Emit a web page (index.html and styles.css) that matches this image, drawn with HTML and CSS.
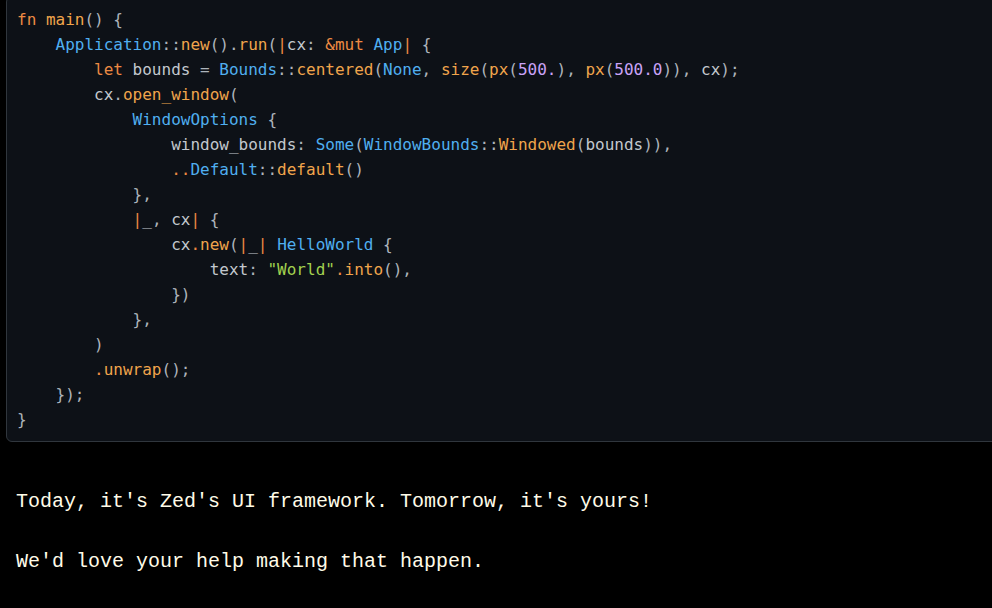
FILE: index.html
```html
<!DOCTYPE html>
<html lang="en">
<head>
<meta charset="utf-8">
<title>Zed UI framework</title>
<link rel="stylesheet" href="styles.css">
</head>
<body>
<div class="page">
<pre class="code"><code><span class="k">fn</span> <span class="f">main</span><span class="p">()</span> <span class="p">{</span>
    <span class="t">Application</span><span class="p">::</span><span class="f">new</span><span class="p">().</span><span class="f">run</span><span class="p">(</span><span class="k">|</span>cx<span class="p">:</span> <span class="k">&amp;mut</span> <span class="t">App</span><span class="k">|</span> <span class="p">{</span>
        <span class="k">let</span> bounds <span class="p">=</span> <span class="t">Bounds</span><span class="p">::</span><span class="f">centered</span><span class="p">(</span><span class="t">None</span><span class="p">,</span> <span class="f">size</span><span class="p">(</span><span class="f">px</span><span class="p">(</span><span class="n">500.</span><span class="p">),</span> <span class="f">px</span><span class="p">(</span><span class="n">500.0</span><span class="p">)),</span> cx<span class="p">);</span>
        cx<span class="p">.</span><span class="f">open_window</span><span class="p">(</span>
            <span class="t">WindowOptions</span> <span class="p">{</span>
                window_bounds<span class="p">:</span> <span class="t">Some</span><span class="p">(</span><span class="t">WindowBounds</span><span class="p">::</span><span class="f">Windowed</span><span class="p">(</span>bounds<span class="p">)),</span>
                <span class="k">..</span><span class="t">Default</span><span class="p">::</span><span class="f">default</span><span class="p">()</span>
            <span class="p">},</span>
            <span class="k">|</span>_<span class="p">,</span> cx<span class="k">|</span> <span class="p">{</span>
                cx<span class="k">.</span><span class="f">new</span><span class="p">(</span><span class="k">|</span>_<span class="k">|</span> <span class="t">HelloWorld</span> <span class="p">{</span>
                    text<span class="p">:</span> <span class="s">"World"</span><span class="k">.</span><span class="f">into</span><span class="p">(),</span>
                <span class="p">})</span>
            <span class="p">},</span>
        <span class="p">)</span>
        <span class="k">.</span><span class="f">unwrap</span><span class="p">();</span>
    <span class="p">});</span>
<span class="p">}</span></code></pre>
<div class="prose">
<p>Today, it's Zed's UI framework. Tomorrow, it's yours!</p>
<p>We'd love your help making that happen.</p>
</div>
</div>
</body>
</html>
```

FILE: styles.css
```css
html, body {
  margin: 0;
  padding: 0;
  background: #000;
}

.page {
  overflow: hidden;
  height: 608px;
}

.code {
  margin: -4px -40px 0 6px;
  padding: 10px 10px 9px 10px;
  background: #0d1117;
  border: 1px solid #30363d;
  border-radius: 6px;
  font-family: "DejaVu Sans Mono", "Liberation Mono", monospace;
  font-size: 16px;
  line-height: 25px;
  color: #c2c8ce;
  white-space: pre;
}

.code code {
  font-family: inherit;
}

.k { color: #ec8a43; }
.f { color: #f0a54c; }
.t { color: #50aff0; }
.p { color: #adb4bb; }
.n { color: #c9a3f7; }
.s { color: #a3d14f; }

.prose {
  padding: 15px 16px 0 16px;
  font-family: "Liberation Mono", "Courier New", monospace;
  font-size: 20px;
  line-height: 30px;
  color: #fffbe8;
}

.prose p {
  margin: 30px 0;
}
```
